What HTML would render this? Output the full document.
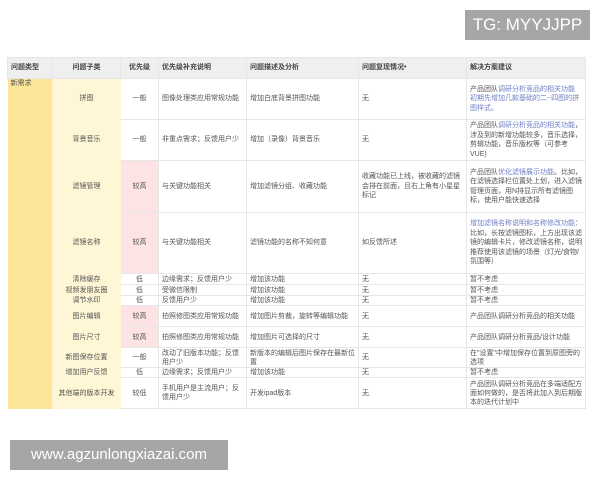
<!DOCTYPE html>
<html><head><meta charset="utf-8"><style>
body{margin:0;width:600px;height:480px;background:#fff;position:relative;overflow:hidden;font-family:"Liberation Sans","Noto Sans CJK SC",sans-serif;}
.tg{position:absolute;left:465px;top:10px;width:125px;height:30px;background:#a6a6a6;color:#fff;font-size:17px;line-height:30px;text-align:center;}
.wm{position:absolute;left:10px;top:440px;width:218px;height:30px;background:#a6a6a6;color:#fff;font-size:15px;line-height:30px;text-align:center;}
table{position:absolute;left:7px;top:57px;border-collapse:collapse;table-layout:fixed;font-size:7px;line-height:9.5px;color:#555;}
td{border:1px solid #e6e6e6;padding:0 3px;vertical-align:middle;overflow:hidden;}
tr.h td{background:#efefef;height:20px;font-weight:bold;color:#444;}
.c1{background:#fde597;vertical-align:top;border:none;}
.c2{background:#fff6d6;text-align:center;border-color:#fff6d6;}
.c3{text-align:center;}
.pk{background:#fde3e3;}
.b{color:#6f7fc4;}
tr.s td{line-height:9px;}
</style></head><body>
<div class="tg">TG: MYYJJPP</div>
<table>
<colgroup><col style="width:45px"><col style="width:68px"><col style="width:38px"><col style="width:88px"><col style="width:112px"><col style="width:108px"><col style="width:119px"></colgroup>
<tr class="h"><td>问题类型</td><td style="text-align:center">问题子类</td><td class="c3">优先级</td><td>优先级补充说明</td><td>问题描述及分析</td><td>问题复现情况•</td><td>解决方案建议</td></tr>
<tr style="height:41px"><td class="c1" rowspan="13">新需求</td><td class="c2">拼图</td><td class="c3">一般</td><td>图像处理类应用常规功能</td><td>增加白底背景拼图功能</td><td>无</td><td>产品团队<span class="b">调研分析竞品的相关功能<br>初期先增加几款基础的二~四图的拼图样式。</span></td></tr>
<tr style="height:41px"><td class="c2">背景音乐</td><td class="c3">一般</td><td>非重点需求；反馈用户少</td><td>增加（录像）背景音乐</td><td>无</td><td>产品团队<span class="b">调研分析竞品的相关功能</span>，涉及到的新增功能较多，音乐选择，剪辑功能，音乐版权等（可参考VUE)</td></tr>
<tr style="height:52px"><td class="c2">滤镜管理</td><td class="c3 pk">较高</td><td>与关键功能相关</td><td>增加滤镜分组、收藏功能</td><td>收藏功能已上线，被收藏的滤镜会排在前面，且右上角有小星星标记</td><td>产品团队<span class="b">优化滤镜展示功能</span>。比如，在滤镜选择栏位置处上划，进入滤镜管理页面，用N排显示所有滤镜图标，使用户能快速选择</td></tr>
<tr style="height:61px"><td class="c2">滤镜名称</td><td class="c3 pk">较高</td><td>与关键功能相关</td><td>滤镜功能的名称不知何意</td><td>如反馈所述</td><td><span class="b">增加滤镜名称说明和名称修改功能</span>：比如，长按滤镜图标，上方出现该滤镜的编辑卡片，修改滤镜名称，说明推荐使用该滤镜的场景（灯光/食物/氛围等）</td></tr>
<tr class="s" style="height:11px"><td class="c2">清除缓存</td><td class="c3">低</td><td>边缘需求；反馈用户少</td><td>增加该功能</td><td>无</td><td>暂不考虑</td></tr>
<tr class="s" style="height:11px"><td class="c2">视频发朋友圈</td><td class="c3">低</td><td>受微信限制</td><td>增加该功能</td><td>无</td><td>暂不考虑</td></tr>
<tr class="s" style="height:10px"><td class="c2">调节水印</td><td class="c3">低</td><td>反馈用户少</td><td>增加该功能</td><td>无</td><td>暂不考虑</td></tr>
<tr class="s" style="height:21px"><td class="c2">图片编辑</td><td class="c3 pk">较高</td><td>拍照修图类应用常规功能</td><td>增加图片剪裁，旋转等编辑功能</td><td>无</td><td>产品团队调研分析竞品的相关功能</td></tr>
<tr class="s" style="height:21px"><td class="c2">图片尺寸</td><td class="c3 pk">较高</td><td>拍照修图类应用常规功能</td><td>增加图片可选择的尺寸</td><td>无</td><td>产品团队调研分析竞品/设计功能</td></tr>
<tr class="s" style="height:20px"><td class="c2">新图保存位置</td><td class="c3">一般</td><td>改动了旧版本功能；反馈用户少</td><td>新版本的编辑后图片保存在最新位置</td><td>无</td><td>在"设置"中增加保存位置到原图旁的选项</td></tr>
<tr class="s" style="height:10px"><td class="c2">增加用户反馈</td><td class="c3">低</td><td>边缘需求；反馈用户少</td><td>增加该功能</td><td>无</td><td>暂不考虑</td></tr>
<tr class="s" style="height:31px"><td class="c2">其他端的版本开发</td><td class="c3">较低</td><td>手机用户是主流用户；反馈用户少</td><td>开发ipad版本</td><td>无</td><td>产品团队调研分析竞品在多端适配方面如何做的，是否将此加入到后期版本的迭代计划中</td></tr>
</table>
<div class="wm">www.agzunlongxiazai.com</div>
</body></html>
